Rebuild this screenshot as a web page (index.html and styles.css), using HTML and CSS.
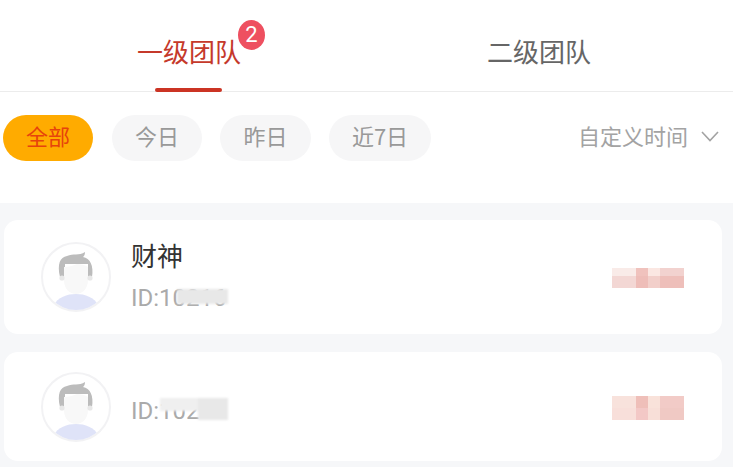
FILE: index.html
```html
<!DOCTYPE html>
<html lang="zh-CN">
<head>
  <meta charset="UTF-8">
  <title>我的团队</title>
  <link rel="stylesheet" href="styles.css">
</head>
<body>

  <div class="tabs">
    <div class="tab tab-active">
      <span class="tab-label">一级团队<span class="tab-badge">2</span></span>
    </div>
    <div class="tab">
      <span class="tab-label">二级团队</span>
    </div>
  </div>

  <div class="filter-bar">
    <div class="filter-pills">
      <span class="pill pill-active">全部</span>
      <span class="pill">今日</span>
      <span class="pill pill-wide">昨日</span>
      <span class="pill pill-last">近7日</span>
    </div>
    <div class="custom-time">
      <span>自定义时间</span>
      <svg class="chevron" width="18" height="11" viewBox="0 0 18 11">
        <path d="M1 1 L9 9.5 L17 1" fill="none" stroke="#a3a3a3" stroke-width="1.6"/>
      </svg>
    </div>
  </div>

  <div class="member-list">
    <div class="member-card">
      <div class="avatar">
        <svg width="70" height="70" viewBox="0 0 70 70">
          <path d="M12 64 C17 55 26 52 35 52 C44 52 53 55 58 64 C52 69 44 70 35 70 C26 70 18 69 12 64 Z" fill="#dfe3f8"/>
          <path d="M19 35 C16 22 19 15 26 14 C32 11 38 14 44 10 C44 13 43 14 42 15 C49 16 53 24 51 35 L47 35 L47 22 L24 22 L24 35 Z" fill="#bcbcbc"/>
          <path d="M23 25 C27 25 32 24 36 22 C40 22 44 23 47 25 L47 38 C47 47 41 52 35 52 C29 52 23 47 23 38 Z" fill="#f8f8f8"/>
          <circle cx="21" cy="36" r="2.6" fill="#e8e8e8"/>
          <circle cx="49" cy="36" r="2.6" fill="#e8e8e8"/>
        </svg>
      </div>
      <div class="member-info">
        <div class="member-name">财神</div>
        <div class="member-id">ID:10216<span class="id-mask id-mask-first"></span></div>
      </div>
      <div class="mosaic mosaic-first">
        <i class="m1"></i><i class="m2"></i><i class="m3"></i><i class="m4"></i>
        <i class="m5"></i><i class="m6"></i><i class="m7"></i><i class="m8"></i>
      </div>
    </div>

    <div class="member-card member-card-short">
      <div class="avatar">
        <svg width="70" height="70" viewBox="0 0 70 70">
          <path d="M12 64 C17 55 26 52 35 52 C44 52 53 55 58 64 C52 69 44 70 35 70 C26 70 18 69 12 64 Z" fill="#dfe3f8"/>
          <path d="M19 35 C16 22 19 15 26 14 C32 11 38 14 44 10 C44 13 43 14 42 15 C49 16 53 24 51 35 L47 35 L47 22 L24 22 L24 35 Z" fill="#bcbcbc"/>
          <path d="M23 25 C27 25 32 24 36 22 C40 22 44 23 47 25 L47 38 C47 47 41 52 35 52 C29 52 23 47 23 38 Z" fill="#f8f8f8"/>
          <circle cx="21" cy="36" r="2.6" fill="#e8e8e8"/>
          <circle cx="49" cy="36" r="2.6" fill="#e8e8e8"/>
        </svg>
      </div>
      <div class="member-info">
        <div class="member-id">ID:102<span class="id-mask id-mask-second"></span></div>
      </div>
      <div class="mosaic mosaic-second">
        <i class="n1"></i><i class="n2"></i><i class="n3"></i><i class="n4"></i>
        <i class="n5"></i><i class="n6"></i><i class="n7"></i><i class="n8"></i>
      </div>
    </div>
  </div>

</body>
</html>
```

FILE: styles.css
```css
* {
  box-sizing: border-box;
}
html, body {
  margin: 0;
  height: 467px;
  overflow: hidden;
}
body {
  background-color: #fff;
  font-family: "Noto Sans CJK SC", "Noto Sans", sans-serif;
}
.tabs {
  display: flex;
  height: 92px;
  padding: 0 19px 0 14px;
  border-bottom: 1px solid #ececec;
}
.tab {
  position: relative;
  flex: 1;
  display: flex;
  justify-content: center;
  padding-top: 32px;
  color: #666;
  font-size: 26px;
  line-height: 38px;
}
.tab-active {
  color: #c5392b;
}
.tab-active::after {
  content: "";
  position: absolute;
  left: 141px;
  bottom: -1px;
  width: 67px;
  height: 4px;
  border-radius: 2px;
  background-color: #cb3424;
}
.tab-label {
  position: relative;
}
.tab-badge {
  position: absolute;
  top: -12px;
  left: 101px;
  width: 27px;
  height: 30px;
  border-radius: 50%;
  background-color: #ee5060;
  color: #fff;
  font-family: "Roboto", sans-serif;
  font-size: 22px;
  line-height: 30px;
  text-align: center;
}
.filter-bar {
  display: flex;
  justify-content: space-between;
  align-items: center;
  height: 111px;
  padding: 0 14px 20px 3px;
  background-color: #fff;
}
.filter-pills {
  display: flex;
  gap: 18px;
}
.pill {
  width: 90px;
  height: 46px;
  border-radius: 23px;
  background-color: #f6f6f7;
  color: #999;
  font-size: 22px;
  line-height: 41px;
  text-align: center;
}
.pill-wide {
  width: 91px;
}
.pill-last {
  width: 102px;
}
.pill-active {
  margin-right: 1px;
  background-color: #ffab00;
  color: #e6430c;
}
.custom-time {
  display: flex;
  align-items: center;
  gap: 13px;
  margin-top: -6px;
  color: #a3a3a3;
  font-size: 22px;
  line-height: 46px;
}
.chevron {
  margin-top: 3px;
}
.member-list {
  display: flex;
  flex-direction: column;
  gap: 18px;
  height: 264px;
  padding: 17px 11px 0 4px;
  background-color: #f6f7f9;
}
.member-card {
  position: relative;
  display: flex;
  align-items: center;
  flex-shrink: 0;
  height: 114px;
  padding-left: 37px;
  border-radius: 14px;
  background-color: #fff;
}
.member-card-short {
  height: 109px;
}
.avatar {
  width: 70px;
  height: 70px;
  margin-right: 20px;
  border: 2px solid #f2f2f4;
  border-radius: 50%;
  overflow: hidden;
}
.avatar svg {
  display: block;
  margin: -2px;
  filter: blur(0.6px);
}
.member-info {
  margin-top: -2px;
}
.member-name {
  margin-bottom: 6px;
  color: #333;
  font-size: 26px;
  line-height: 38px;
}
.member-id {
  position: relative;
  color: #aaa;
  font-family: "Roboto", sans-serif;
  font-size: 24px;
  line-height: 36px;
}
.member-card-short .member-info {
  margin-top: 9px;
}
.id-mask {
  position: absolute;
  filter: blur(1px);
}
.id-mask-first {
  top: 9px;
  left: 46px;
  width: 51px;
  height: 15px;
  background-color: #e8e8e8;
}
.id-mask-second {
  top: 5px;
  left: 29px;
  width: 68px;
  height: 22px;
  background:
    linear-gradient(#e8e8e8, #e8e8e8) right top / 30px 100% no-repeat,
    linear-gradient(#efefef, #efefef) left top / 100% 13px no-repeat;
}
.mosaic {
  position: absolute;
  right: 38px;
  display: grid;
  grid-template-columns: 24px 12px 12px 24px;
  filter: blur(0.5px);
}
.mosaic-first {
  top: 48px;
  grid-template-rows: 8px 12px;
}
.mosaic-second {
  top: 44px;
  grid-template-rows: 12px 12px;
}
.m1 { background-color: #f9ebe8; }
.m2 { background-color: #f0c2bd; }
.m3 { background-color: #fbe7e2; }
.m4 { background-color: #f2d2cf; }
.m5 { background-color: #f3d7d4; }
.m6 { background-color: #eebdb8; }
.m7 { background-color: #f2cfca; }
.m8 { background-color: #eebfba; }
.n1 { background-color: #f8e2dc; }
.n2 { background-color: #efbfb9; }
.n3 { background-color: #f9e2da; }
.n4 { background-color: #f2cbc7; }
.n5 { background-color: #f8dfda; }
.n6 { background-color: #f3c8c6; }
.n7 { background-color: #f8dfd8; }
.n8 { background-color: #f0c9c4; }
```
